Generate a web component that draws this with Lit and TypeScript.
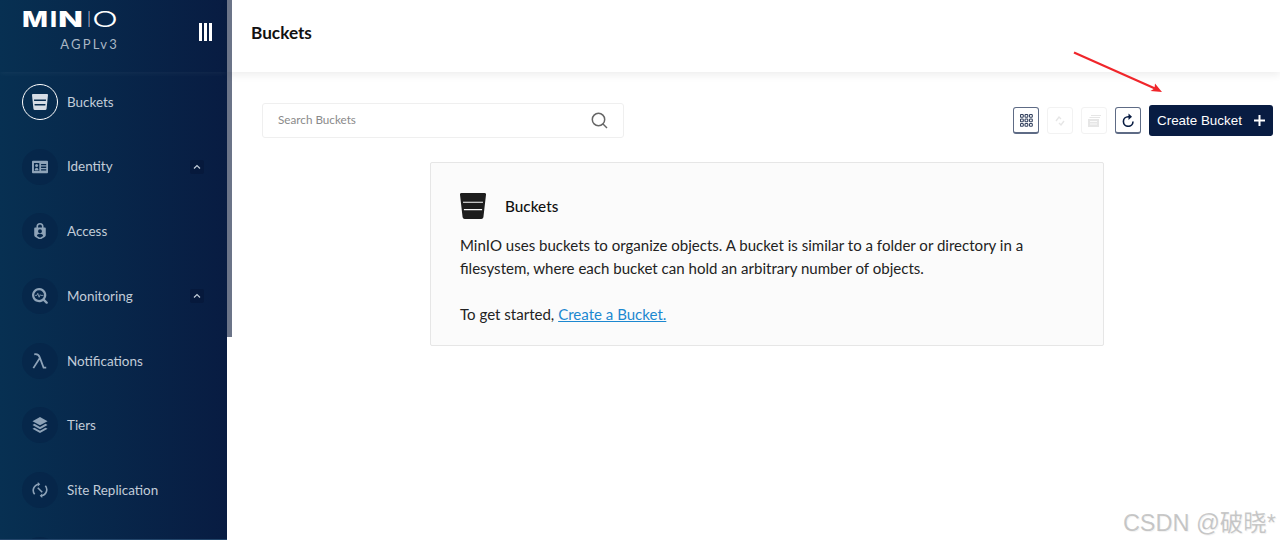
import { LitElement, css, html, svg } from "lit";
import { customElement } from "lit/decorators.js";

const icons: Record<string, any> = {
  buckets: svg`<path d="M1 0h16a1 1 0 0 1 1 1.2L16.4 16.5A1.7 1.7 0 0 1 14.7 18H3.3a1.7 1.7 0 0 1-1.7-1.5L0 1.2A1 1 0 0 1 1 0Zm1.2 6.3.2 1.7h13.2l.2-1.7Zm.6 4.9.2 1.7h12l.2-1.7Z" fill-rule="evenodd"/>`,
  identity: svg`<path d="M1 2h16a1 1 0 0 1 1 1v12a1 1 0 0 1-1 1H1a1 1 0 0 1-1-1V3a1 1 0 0 1 1-1Zm1.2 2.5v9h6v-9Zm8 1V7H16V5.5Zm0 3V10H16V8.5Zm0 3V13H16v-1.5Z" fill-rule="evenodd"/><circle cx="5.2" cy="7.2" r="1.7"/><path d="M3 12.8c.2-2 1-3 2.2-3s2 1 2.2 3Z"/>`,
  access: svg`<path d="M9 0a4 4 0 0 1 4 4v1.2h1.5a1 1 0 0 1 1 1v7.3c0 1-.5 1.7-1.3 2.2L9.500 18.500a1 1 0 0 1-1 0l-4.700-2.800c-.8-.5-1.300-1.200-1.300-2.200V6.200a1 1 0 0 1 1-1H5V4a4 4 0 0 1 4-4Zm0 1.800A2.200 2.200 0 0 0 6.800 4v1.200h4.400V4A2.200 2.200 0 0 0 9 1.800Zm0 5.200a2.200 2.200 0 1 0 0 4.400 2.200 2.200 0 0 0 0-4.400Zm0 5.200c-2 0-3.300 1-3.500 2.300L9 16.700l3.500-2.200c-.2-1.300-1.500-2.300-3.500-2.300Z" fill-rule="evenodd"/>`,
  monitoring: svg`<path d="M8 0a8 8 0 0 1 6.500 12.700l3.100 3.100a1.300 1.300 0 0 1-1.800 1.800l-3.100-3.100A8 8 0 1 1 8 0Zm0 2.500a5.500 5.500 0 1 0 0 11 5.500 5.500 0 0 0 0-11Z" fill-rule="evenodd"/><path d="M3.500 8.300h2l1-2.300 1.500 4.400 1.200-2.900.6.800h3" fill="none" stroke="currentColor" stroke-width="1"/>`,
  notifications: svg`<path d="M2.500 1.500c3.500-.8 5.300.7 6.400 3.800L13 16.500h3M8.600 6 1.500 17" fill="none" stroke="currentColor" stroke-width="2"/>`,
  tiers: svg`<path d="M9 0l8.500 4.700L9 9.400.5 4.700Z"/><path d="M2.800 7.700.5 9l8.500 4.700L17.500 9l-2.300-1.300L9 11.200Z"/><path d="M2.800 12 .5 13.300 9 18l8.500-4.700-2.300-1.300L9 15.500Z"/>`,
  replication: svg`<path d="M8 2.500a7 7 0 0 0-5 11.400M10 15.500a7 7 0 0 0 5-11.400" fill="none" stroke="currentColor" stroke-width="1.800"/><path d="M6.500 0l2.800 2.600-2.800 2.600ZM11.500 18l-2.800-2.600 2.800-2.600Z"/><path d="M6.500 6.500l5 5" fill="none" stroke="currentColor" stroke-width="1.800"/>`,
};

const navItems = [
  { label: "Buckets", icon: "buckets", active: true },
  { label: "Identity", icon: "identity", caret: true },
  { label: "Access", icon: "access" },
  { label: "Monitoring", icon: "monitoring", caret: true },
  { label: "Notifications", icon: "notifications" },
  { label: "Tiers", icon: "tiers" },
  { label: "Site Replication", icon: "replication" },
  { label: "", icon: "" },
];

// letters of the wordmark, x and width measured off the logo
const logoLetters = [
  { ch: "M", x: 0, w: 26, weight: 800 },
  { ch: "I", x: 28, w: 7, weight: 800 },
  { ch: "N", x: 36, w: 25, weight: 800 },
  { ch: "I", x: 66, w: 2, weight: 300 },
  { ch: "O", x: 70, w: 26, weight: 300 },
];

const gridCells = [0, 4.5, 9].flatMap((y) => [0, 4.5, 9].map((x) => ({ x, y })));

@customElement("app-root")
export class AppRoot extends LitElement {
  static styles = css`
    :host {
      display: block;
      position: relative;
      height: 544px;
      overflow: hidden;
      background: #fff;
      font-family: Lato, "Noto Sans", sans-serif;
      color: #1f1f1f;
    }
    .shell {
      display: flex;
      height: 540px;
    }
    .sidebar {
      width: 227px;
      flex: none;
      overflow: hidden;
      box-sizing: border-box;
      border-bottom: 1px solid #23456a;
      background: linear-gradient(90deg, #073052 0%, #081c42 100%);
    }
    .scroll {
      width: 5px;
      height: 337px;
      flex: none;
      background: #6b7488;
    }
    .brand {
      height: 72px;
      box-sizing: border-box;
      padding: 4px 15px 0 22px;
      display: flex;
      justify-content: space-between;
      box-shadow: 0 1px 6px rgba(255, 255, 255, 0.06);
    }
    .logo {
      width: 96px;
      display: flex;
      flex-direction: column;
    }
    .logo svg {
      display: block;
      overflow: visible;
    }
    .license {
      margin-top: 8px;
      margin-right: -1px;
      text-align: right;
      font-size: 13px;
      letter-spacing: 2.2px;
      color: #a9b6c4;
    }
    .menu {
      display: flex;
      gap: 2px;
      margin-top: 19px;
    }
    .menu i {
      width: 3px;
      height: 18px;
      background: #fff;
    }
    nav {
      display: grid;
      grid-auto-rows: 60px;
      row-gap: 4.7px;
    }
    .item {
      display: flex;
      align-items: center;
      gap: 9.5px;
      padding: 0 23px 0 21.5px;
      font-size: 13.45px;
      color: #c2ccd8;
    }
    .dot {
      width: 36px;
      height: 36px;
      flex: none;
      border-radius: 50%;
      display: flex;
      align-items: center;
      justify-content: center;
      background: rgba(6, 38, 72, 0.8);
      color: #8ea3b8;
    }
    .active .dot {
      box-sizing: border-box;
      border: 1.5px solid #fff;
      background: transparent;
      color: #d6dde6;
    }
    .label {
      flex: 1;
      margin-top: -0.5px;
    }
    .caret {
      width: 14px;
      height: 14px;
      display: flex;
      align-items: center;
      justify-content: center;
      border-radius: 2px;
      background: #06193c;
    }
    .main {
      flex: 1;
      min-width: 0;
      display: flex;
      flex-direction: column;
      margin-left: -5px;
    }
    header {
      height: 72px;
      flex: none;
      box-sizing: border-box;
      padding: 0 0 7px 24px;
      display: flex;
      align-items: center;
      font-size: 17.2px;
      font-weight: 700;
      color: #111;
      box-shadow: 0 3px 8px rgba(0, 0, 0, 0.07);
    }
    .content {
      margin-left: 5px;
    }
    .tools {
      display: flex;
      justify-content: space-between;
      align-items: center;
      padding: 31px 7.5px 0 30px;
    }
    .search {
      width: 361.5px;
      height: 35px;
      box-sizing: border-box;
      padding: 0 15px;
      display: flex;
      align-items: center;
      justify-content: space-between;
      border: 1px solid #efefef;
      border-radius: 3px;
      font-size: 11.7px;
      color: #8a8a8a;
    }
    .search span {
      margin-top: -3px;
    }
    .actions {
      display: flex;
      align-items: center;
      gap: 8px;
    }
    .tool {
      width: 26px;
      height: 27px;
      box-sizing: border-box;
      display: flex;
      align-items: center;
      justify-content: center;
      border: 1px solid #5e6b85;
      border-bottom-width: 2px;
      border-radius: 3px;
      color: #081c42;
    }
    .tool.off {
      border: 1px solid #f2f2f2;
      color: #e6e6e6;
    }
    .create {
      width: 123.5px;
      height: 31px;
      box-sizing: border-box;
      padding: 0 8px;
      display: flex;
      align-items: center;
      justify-content: space-between;
      border-radius: 3px;
      background: #081c42;
      color: #fff;
      font-family: "Liberation Sans", Arial, sans-serif;
      font-size: 13.4px;
    }
    .card {
      width: 674px;
      box-sizing: border-box;
      margin: 24px 0 0 198px;
      padding: 30px 28px 19px 29px;
      background: #fbfbfb;
      border: 1px solid #e6e6e6;
      border-radius: 2px;
      font-size: 15.05px;
      line-height: 23px;
      color: #222;
    }
    .card-title {
      display: flex;
      align-items: center;
      gap: 19px;
      margin-bottom: 15px;
      font-size: 15.3px;
      font-weight: 500;
      color: #111;
    }
    .card p {
      margin: 0;
    }
    .card p + p {
      margin-top: 23px;
    }
    .card a {
      color: #1c88d0;
      text-decoration: underline;
    }
    .arrow {
      position: absolute;
      left: 1070px;
      top: 48px;
    }
    .watermark {
      position: absolute;
      right: 4px;
      top: 504px;
      font-family: "Liberation Sans", "Noto Sans CJK SC", sans-serif;
      font-size: 23.5px;
      color: rgba(150, 150, 150, 0.5);
      text-shadow: 1px 1px 1px rgba(0, 0, 0, 0.06);
    }
  `;

  renderNav(item: any) {
    return html`<div class="item ${item.active ? "active" : ""}">
      <span class="dot">
        ${item.icon
          ? html`<svg width="16" height="16" viewBox="0 0 18 18" fill="currentColor">${icons[item.icon]}</svg>`
          : null}
      </span>
      <span class="label">${item.label}</span>
      ${item.caret
        ? html`<span class="caret">
            <svg width="8" height="6" viewBox="0 0 8 6" fill="none" stroke="#c2ccd8" stroke-width="1.2"><path d="M1 4.5 4 1.5l3 3"/></svg>
          </span>`
        : null}
    </div>`;
  }

  render() {
    return html`
      <div class="shell">
        <aside class="sidebar">
          <div class="brand">
            <div class="logo">
              <svg width="96" height="24" viewBox="0 0 96 24" fill="#fff" font-family="Inter, sans-serif" font-size="22">
                ${logoLetters.map(
                  (l) => svg`<text x=${l.x} y="22.5" font-weight=${l.weight} textLength=${l.w} lengthAdjust="spacingAndGlyphs">${l.ch}</text>`
                )}
              </svg>
              <span class="license">AGPLv3</span>
            </div>
            <div class="menu"><i></i><i></i><i></i></div>
          </div>
          <nav>${navItems.map((item) => this.renderNav(item))}</nav>
        </aside>
        <div class="scroll"></div>
        <div class="main">
          <header>Buckets</header>
          <div class="content">
            <div class="tools">
              <div class="search">
                <span>Search Buckets</span>
                <svg width="17" height="17" viewBox="0 0 17 17" fill="none" stroke="#666" stroke-width="1.5"><circle cx="7.5" cy="7.5" r="6.2"/><path d="m12 12 4 4"/></svg>
              </div>
              <div class="actions">
                <span class="tool">
                  <svg width="13" height="13" viewBox="0 0 13 13" fill="none" stroke="#34425f" stroke-width="1.1">
                    ${gridCells.map((c) => svg`<rect x=${c.x + 0.5} y=${c.y + 0.5} width="2.8" height="2.8" rx=".8"/>`)}
                  </svg>
                </span>
                <span class="tool off">
                  <svg width="14" height="14" viewBox="0 0 14 14" fill="none" stroke="currentColor" stroke-width="1.4"><path d="M3 7l3-4 2 2M11 7l-3 4-2-2"/></svg>
                </span>
                <span class="tool off">
                  <svg width="14" height="14" viewBox="0 0 14 14" fill="currentColor"><path d="M4 1h10v1H4ZM2.5 3H13v1H2.5Z"/><path d="M1 5h11v8H1Z"/><path d="M3 7.5h7M3 10h7" stroke="#fff" stroke-width=".8"/></svg>
                </span>
                <span class="tool">
                  <svg width="13" height="14" viewBox="0 0 13 14" fill="none" stroke="currentColor" stroke-width="1.6"><path d="M11 8.5a4.8 4.8 0 1 1-4.8-4.8H8"/><path d="M6.5 0.5 10 3.7 6.5 6.9" fill="currentColor" stroke="none"/></svg>
                </span>
                <span class="create">
                  <span>Create Bucket</span>
                  <svg width="11" height="11" viewBox="0 0 11 11" fill="none" stroke="#fff" stroke-width="2"><path d="M5.5 0v11M0 5.5h11"/></svg>
                </span>
              </div>
            </div>
            <section class="card">
              <div class="card-title">
                <svg width="26" height="26" viewBox="0 0 24 24" fill="#1d1d1d">
                  <path d="M1.5 0h21a1.5 1.5 0 0 1 1.5 1.7L21.6 22.4A2 2 0 0 1 19.6 24H4.4a2 2 0 0 1-2-1.6L0 1.7A1.5 1.5 0 0 1 1.5 0Z"/>
                  <path d="M2.8 8h18.4v1.1H2.8ZM3.6 14.8h16.8v1.1H3.6Z" fill="#fbfbfb"/>
                </svg>
                <span>Buckets</span>
              </div>
              <p>MinIO uses buckets to organize objects. A bucket is similar to a folder or directory in a filesystem, where each bucket can hold an arbitrary number of objects.</p>
              <p>To get started, <a>Create a Bucket.</a></p>
            </section>
          </div>
        </div>
      </div>
      <svg class="arrow" width="100" height="50" viewBox="0 0 100 50" fill="none">
        <path d="M4 4.5 85 40.5" stroke="#f0262b" stroke-width="2.2"/>
        <path d="M92 44 80.5 43 84.5 40.5 85 35.5Z" fill="#f0262b"/>
      </svg>
      <div class="watermark">CSDN @破晓*</div>
    `;
  }
}
